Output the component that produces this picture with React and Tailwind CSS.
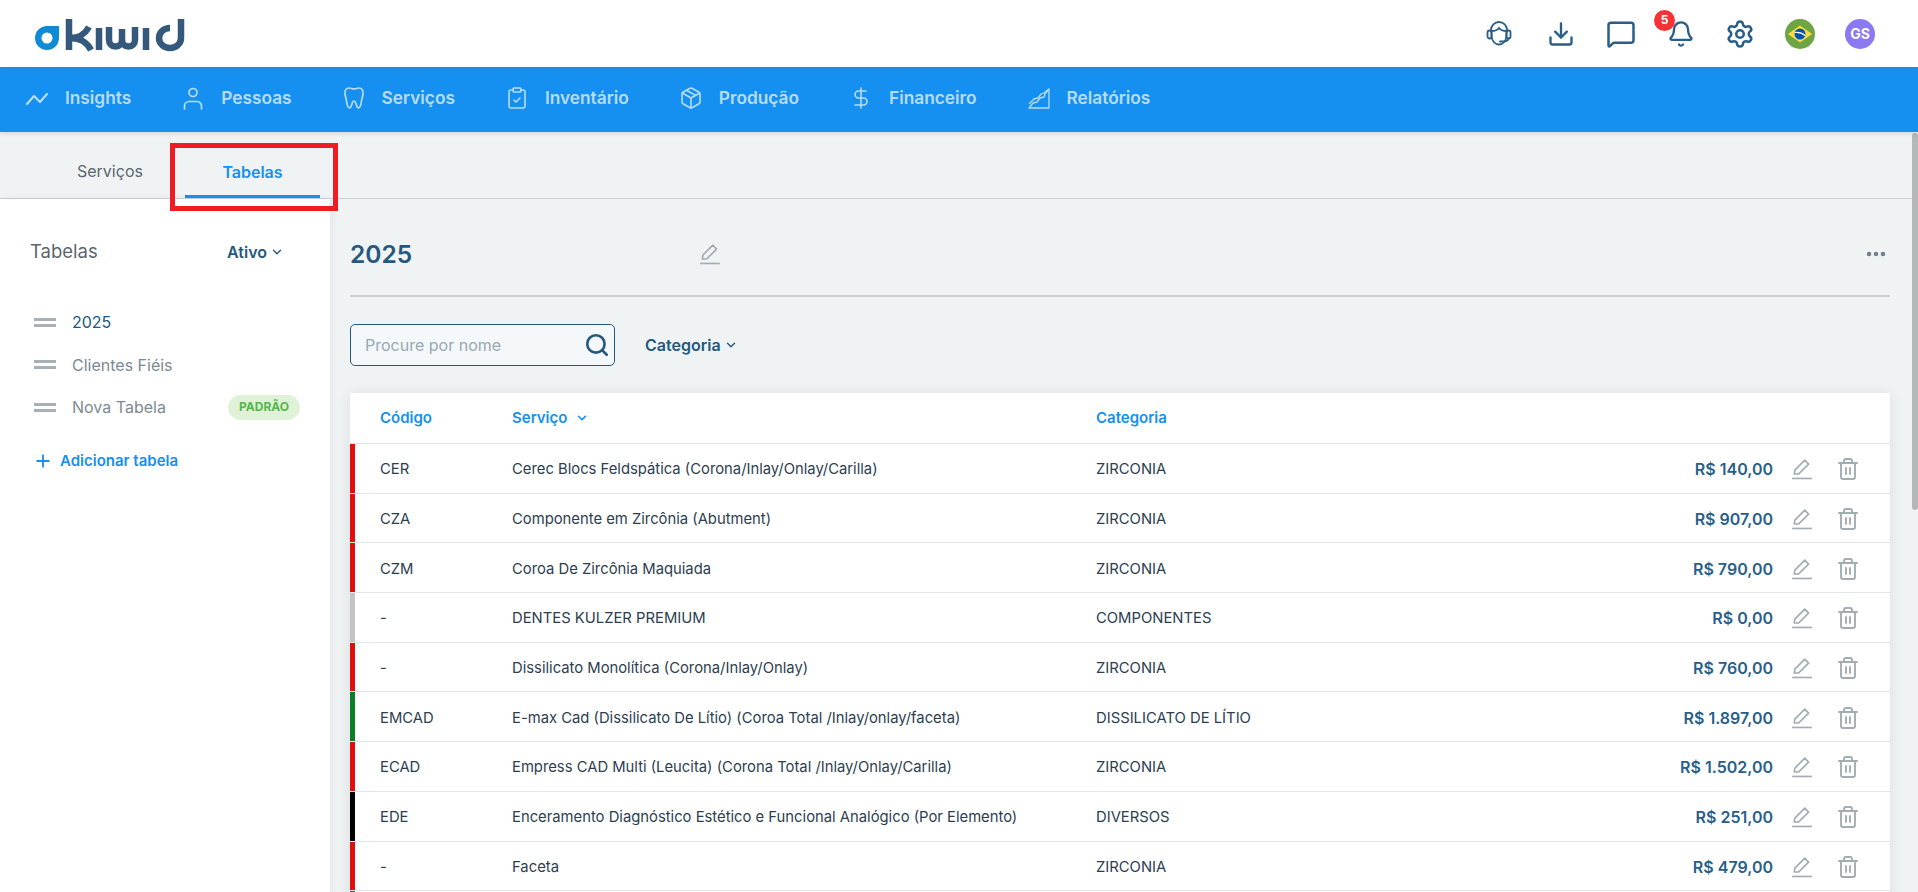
import React from "react";
import { Download, MessageSquare, Bell, Settings, ClipboardCheck, Package, DollarSign, ChevronDown, Plus, Search, Trash2, Ellipsis } from "lucide-react";

const rows = [
  { bar: "bg-[#e00f0f]", code: "CER", name: "Cerec Blocs Feldspática (Corona/Inlay/Onlay/Carilla)", cat: "ZIRCONIA", price: "R$ 140,00" },
  { bar: "bg-[#e00f0f]", code: "CZA", name: "Componente em Zircônia (Abutment)", cat: "ZIRCONIA", price: "R$ 907,00" },
  { bar: "bg-[#e00f0f]", code: "CZM", name: "Coroa De Zircônia Maquiada", cat: "ZIRCONIA", price: "R$ 790,00" },
  { bar: "bg-[#c4c4c4]", code: "-", name: "DENTES KULZER PREMIUM", cat: "COMPONENTES", price: "R$ 0,00" },
  { bar: "bg-[#e00f0f]", code: "-", name: "Dissilicato Monolítica (Corona/Inlay/Onlay)", cat: "ZIRCONIA", price: "R$ 760,00" },
  { bar: "bg-[#0b7d26]", code: "EMCAD", name: "E-max Cad (Dissilicato De Lítio) (Coroa Total /Inlay/onlay/faceta)", cat: "DISSILICATO DE LÍTIO", price: "R$ 1.897,00" },
  { bar: "bg-[#e00f0f]", code: "ECAD", name: "Empress CAD Multi (Leucita) (Corona Total /Inlay/Onlay/Carilla)", cat: "ZIRCONIA", price: "R$ 1.502,00" },
  { bar: "bg-black", code: "EDE", name: "Enceramento Diagnóstico Estético e Funcional Analógico (Por Elemento)", cat: "DIVERSOS", price: "R$ 251,00" },
  { bar: "bg-[#e00f0f]", code: "-", name: "Faceta", cat: "ZIRCONIA", price: "R$ 479,00" },
];

const Logo = () => (
  <svg width="160" height="36" viewBox="30 14 160 36" fill="none">
    <path d="M48 24H60V36A12 12 0 1 1 48 24Z" fill="#0f8bd6" />
    <circle cx="48" cy="36" r="5.5" fill="#fff" />
    <g stroke="#34597d" strokeWidth="6.5">
      <path d="M70 17V48" />
      <path d="M72 36C79 36 86 32 90 25" />
      <path d="M72 36C80 36 88 40 92 48" />
      <path d="M100 26V48" />
      <path d="M110 25V38A6.500 6.500 0 0 0 123 38V27V38A6.500 6.500 0 0 0 136 38V25" />
      <path d="M147 26V48" />
      <path d="M182 17V36A11 10 0 1 1 171 26" />
    </g>
  </svg>
);

const Headset = () => (
  <svg width="28" height="28" viewBox="0 0 28 28" fill="none" stroke="currentColor" strokeWidth="1.800" strokeLinecap="round">
    <path d="M6 11V10a8 8 0 0 1 16 0v1" />
    <path d="M6.500 11c3 0 6-1 7.500-3 1.500 2 4.500 3 7.500 3" />
    <path d="M6.500 11v4c0 6 3.500 9.500 7.500 9.500s7.500-3.500 7.500-9.500v-4" />
    <rect x="2.500" y="10.500" width="4" height="8" rx="2" />
    <rect x="21.500" y="10.500" width="4" height="8" rx="2" />
    <path d="M23.500 18.500c0 2-2.500 3-6.500 3h-2" />
  </svg>
);

const BrazilFlag = () => (
  <svg width="30" height="30" viewBox="0 0 30 30">
    <circle cx="15" cy="15" r="15" fill="#6da544" />
    <path d="M15 6.500 27 15 15 23.500 3 15Z" fill="#ffda44" />
    <circle cx="15" cy="15" r="5.500" fill="#0052b4" />
    <path d="M9.800 13.500c4-.5 7.500.5 10.200 3" stroke="#fff" strokeWidth="1.200" fill="none" />
  </svg>
);

const TrendIcon = (props) => (
  <svg {...props} viewBox="0 0 24 24" fill="none" stroke="currentColor" strokeWidth="2.200" strokeLinecap="round" strokeLinejoin="round">
    <path d="M2 18l7-8 6 6 7-8" />
  </svg>
);

const PersonIcon = (props) => (
  <svg {...props} viewBox="0 0 24 24" fill="none" stroke="currentColor" strokeWidth="1.700" strokeLinecap="round">
    <circle cx="12" cy="6.500" r="4" />
    <path d="M3.500 23v-3a4.500 4.500 0 0 1 4.500-4.500h8a4.500 4.500 0 0 1 4.500 4.500v3" />
  </svg>
);

const ToothIcon = (props) => (
  <svg {...props} viewBox="0 0 24 24" fill="none" stroke="currentColor" strokeWidth="1.700" strokeLinejoin="round">
    <path d="M7 2c2 0 3 1 5 1s3-1 5-1c3 0 4.500 2.500 4 6-.5 3-1 4-1.500 7-.4 2.500-1 7-3 7-2.500 0-2-7-4.500-7s-2 7-4.500 7c-2 0-2.600-4.500-3-7-.5-3-1-4-1.500-7-.5-3.500 1-6 4-6Z" />
  </svg>
);

const ReportIcon = (props) => (
  <svg {...props} viewBox="0 0 24 24" fill="none" stroke="currentColor" strokeWidth="1.300" strokeLinejoin="round">
    <path d="M2 22h20V3l-4 5-1 3-4 1-3 4-4 1-4 5Z" />
    <path d="M2 18l5-5 4-1 3-4 3-1 5-4" />
  </svg>
);

const EditIcon = ({ className }) => (
  <svg className={className} width="22" height="22" viewBox="0 0 20 20" fill="none" stroke="currentColor" strokeWidth="1.500" strokeLinejoin="round">
    <path d="M3 14.500 3.500 11 12.500 2l3.500 3.500-9 9Z" />
    <path d="M1 18.600h18" />
  </svg>
);

const navItems = [
  { label: "Insights", Icon: TrendIcon, h: 24 },
  { label: "Pessoas", Icon: PersonIcon, h: 24 },
  { label: "Serviços", Icon: ToothIcon, h: 24 },
  { label: "Inventário", Icon: ClipboardCheck, h: 24 },
  { label: "Produção", Icon: Package, h: 26 },
  { label: "Financeiro", Icon: DollarSign, h: 30 },
  { label: "Relatórios", Icon: ReportIcon, h: 24 },
];

const tables = [
  { name: "2025", active: true },
  { name: "Clientes Fiéis" },
  { name: "Nova Tabela", isDefault: true },
];

const Header = () => (
  <header className="h-[67px] bg-white flex items-center justify-between pl-[29px] pr-[43px] shrink-0">
    <Logo />
    <div className="flex items-center gap-[30px] text-[#285f8a]">
      <span className="mr-[4px]"><Headset /></span>
      <Download size={28} strokeWidth={2} className="mr-[1px]" />
      <MessageSquare size={30} strokeWidth={2} className="mr-[1px]" />
      <div className="relative">
        <Bell size={28} strokeWidth={2} />
        <span className="absolute -top-[10px] -left-[13px] w-[21px] h-[21px] rounded-full bg-[#f53337] text-white text-[12px] font-bold flex items-center justify-center">5</span>
      </div>
      <Settings size={30} strokeWidth={2} />
      <BrazilFlag />
      <div className="w-[30px] h-[30px] rounded-full bg-[#8b78f5] text-white text-[14px] font-bold flex items-center justify-center">GS</div>
    </div>
  </header>
);

const Nav = () => (
  <nav className="h-[65px] bg-[#1590f1] flex items-center gap-[50px] pl-[25px] pb-[4px] shrink-0 shadow-[0_2px_4px_rgba(0,0,0,0.1)] relative z-10">
    {navItems.map(({ label, Icon, h }) => (
      <a key={label} className="flex items-center gap-[16px] text-[#b7dcfa] text-[17.300px] font-semibold">
        <Icon width="24" height={h} strokeWidth={1.6} />
        {label}
      </a>
    ))}
  </nav>
);

const Tabs = () => (
  <div className="h-[67px] shrink-0 border-b border-[#c8d0d8] flex">
    <div className="w-[170px] pl-[77px] pt-[12px] flex items-center text-[16px] text-[#5b6670]">Serviços</div>
    <div className="relative w-[168px] h-[68px] border-[5px] border-[#ee1c25] mt-[11px] z-10">
      <div className="h-[50px] ml-[10px] mr-[13px] flex items-center justify-center text-[16px] font-semibold text-[#1590f1] border-b-[3px] border-[#1590f1]">Tabelas</div>
    </div>
  </div>
);

const Sidebar = () => (
  <aside className="w-[330px] shrink-0 bg-white shadow-[2px_0_8px_rgba(0,0,0,0.06)] pt-[39px]">
    <div className="flex items-center justify-between pl-[30px] pr-[46px]">
      <span className="text-[18.500px] text-[#5b6670]">Tabelas</span>
      <span className="flex items-center gap-[3px] text-[16px] font-semibold text-[#24587f]">
        Ativo <ChevronDown size={14} strokeWidth={2.400} />
      </span>
    </div>
    <ul className="mt-[44px] flex flex-col gap-[17.500px] pl-[34px] pr-[30px]">
      {tables.map((t) => (
        <li key={t.name} className="h-[25px] flex items-center">
          <span className="w-[22px] flex flex-col gap-[3px] mr-[16px]">
            <span className="h-[3px] bg-[#a9b1b6]" />
            <span className="h-[3px] bg-[#a9b1b6]" />
          </span>
          <span className={`text-[16px] ${t.active ? "text-[#24587f]" : "text-[#7e8a92]"}`}>{t.name}</span>
          {t.isDefault && (
            <span className="ml-auto w-[72px] h-[25px] rounded-full bg-[#dff2d8] text-[#52b848] text-[12px] font-bold flex items-center justify-center">PADRÃO</span>
          )}
        </li>
      ))}
    </ul>
    <div className="mt-[30px] pl-[33px] flex items-center gap-[7px] text-[#1590f1] text-[15px] font-semibold">
      <Plus size={20} strokeWidth={2.200} />
      Adicionar tabela
    </div>
  </aside>
);

const ServiceRow = ({ row }) => (
  <div className="h-[49.700px] pt-[2px] border-b border-[#e2e5e8] flex items-center relative">
    <span className={`absolute left-0 top-0 bottom-0 w-[5px] ${row.bar}`} />
    <span className="w-[132px] ml-[30px] text-[14.800px] text-[#2c3e50]">{row.code}</span>
    <span className="w-[584px] text-[14.800px] text-[#2c3e50]">{row.name}</span>
    <span className="flex-1 text-[14.800px] text-[#2c3e50]">{row.cat}</span>
    <span className="text-[16px] font-semibold text-[#285f8a] mr-[18px]">{row.price}</span>
    <EditIcon className="text-[#a2adb3] mr-[23px]" />
    <Trash2 size={24} strokeWidth={1.900} className="text-[#a2adb3] mr-[30px]" />
  </div>
);

const Content = () => (
  <main className="flex-1 pl-[20px] pr-[28px]">
    <div className="h-[98px] pt-[14px] border-b-2 border-[#c9d1d6] flex items-center relative">
      <h1 className="w-[349px] text-[24.500px] font-semibold text-[#24587f]">2025</h1>
      <EditIcon className="text-[#a2adb3]" />
      <Ellipsis size={24} strokeWidth={2.500} className="ml-auto mr-[2px] text-[#6f7f8c]" />
    </div>
    <div className="mt-[27px] flex items-center">
      <div className="w-[265px] h-[42px] border border-[#24587f] rounded-[5px] bg-[#f5f8fa] flex items-center pl-[14px] pr-[4px]">
        <span className="flex-1 text-[16px] text-[#9aa7b4]">Procure por nome</span>
        <Search size={26} strokeWidth={2.400} className="text-[#24587f]" />
      </div>
      <span className="ml-[30px] flex items-center gap-[3px] text-[16px] font-semibold text-[#24587f]">
        Categoria <ChevronDown size={14} strokeWidth={2.400} />
      </span>
    </div>
    <div className="mt-[27px] bg-white shadow-[0_2px_14px_rgba(0,0,0,0.09)]">
      <div className="h-[51px] border-b border-[#e2e5e8] flex items-center text-[15px] font-semibold text-[#1590f1]">
        <span className="w-[132px] ml-[30px]">Código</span>
        <span className="w-[584px] flex items-center gap-[8px]">
          Serviço <ChevronDown size={14} strokeWidth={2.800} />
        </span>
        <span>Categoria</span>
      </div>
      {rows.map((row) => (
        <ServiceRow key={row.name} row={row} />
      ))}
      <div className="h-[49.700px] relative">
        <span className="absolute left-0 top-0 bottom-0 w-[5px] bg-[#285f8a]" />
      </div>
    </div>
  </main>
);

export default function App() {
  return (
    <div className="h-screen overflow-hidden bg-[#eff3f4] flex flex-col relative font-['Inter',sans-serif]">
      <Header />
      <Nav />
      <Tabs />
      <div className="flex flex-1 min-h-0">
        <Sidebar />
        <Content />
      </div>
      <div className="absolute right-0 top-[133px] w-[6px] h-[377px] rounded-full bg-[#b3b8b8]" />
    </div>
  );
}
